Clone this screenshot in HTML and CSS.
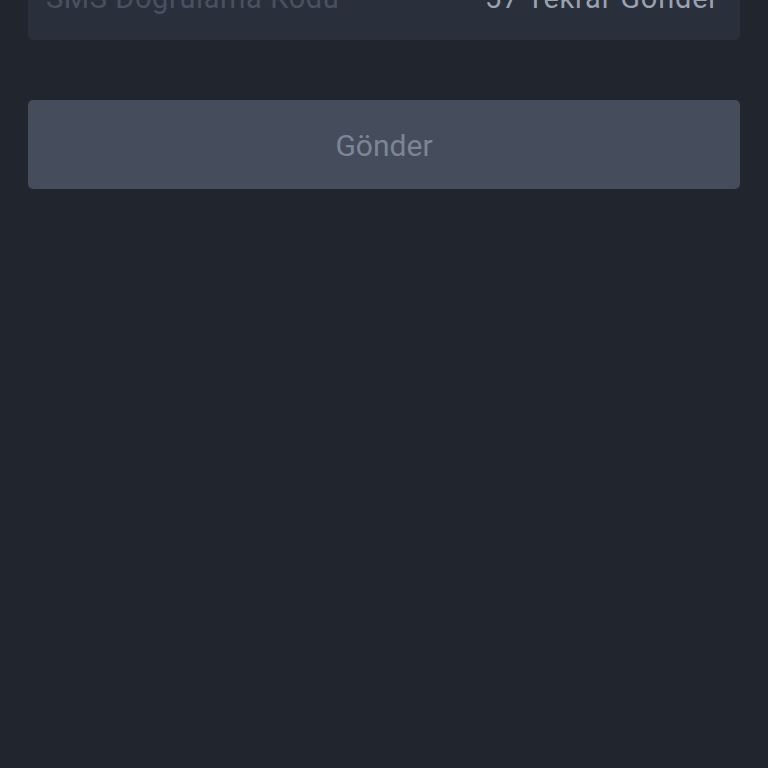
FILE: index.html
```html
<!DOCTYPE html>
<html lang="tr">
<head>
<meta charset="utf-8">
<link rel="stylesheet" href="styles.css">
</head>
<body>
<div class="page">
  <div class="field">
    <span class="placeholder">SMS Doğrulama Kodu</span>
    <span class="resend">57 Tekrar Gönder</span>
  </div>
  <button class="submit">Gönder</button>
</div>
</body>
</html>
```
FILE: styles.css
```css
html, body {
  margin: 0;
  padding: 0;
  background: #20252e;
  height: 100%;
  overflow: hidden;
}
.page {
  padding: 0 28px;
  display: flex;
  flex-direction: column;
  font-family: Roboto, "Noto Sans", sans-serif;
}
.field {
  margin-top: -48px;
  height: 88px;
  background: #2a303b;
  border-radius: 5px;
  display: flex;
  align-items: center;
  justify-content: space-between;
  padding: 3px 21px 0 18px;
  box-sizing: border-box;
  font-size: 29px;
}
.placeholder {
  color: #495161;
  letter-spacing: 0.6px;
}
.resend {
  color: #9aa2af;
  letter-spacing: 0.8px;
}
.submit {
  margin-top: 60px;
  height: 89px;
  border: none;
  border-radius: 5px;
  background: #454d5c;
  color: #7d8594;
  font-family: Roboto, "Noto Sans", sans-serif;
  font-size: 30px;
  padding: 1px 0 0;
}
```
